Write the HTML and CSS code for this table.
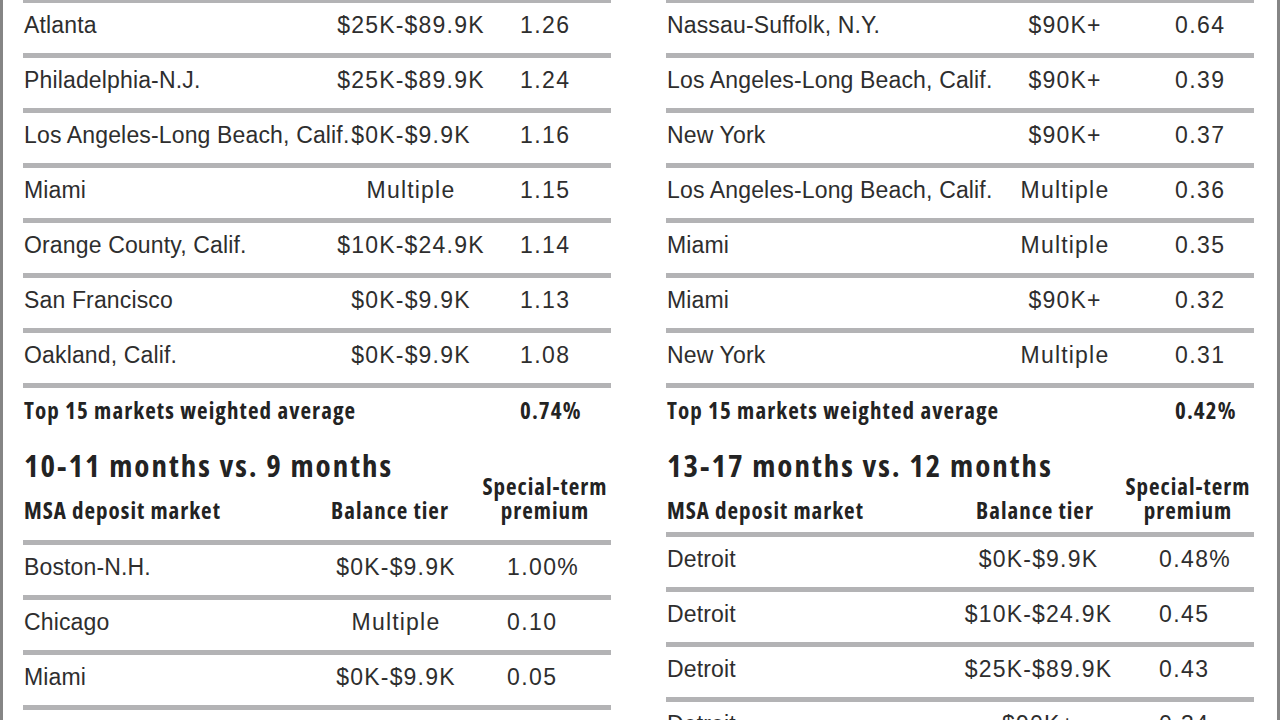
FILE: index.html
```html
<!DOCTYPE html>
<html lang="en">
<head>
<meta charset="utf-8">
<title>Special-term premiums by market</title>
<link rel="stylesheet" href="styles.css">
</head>
<body>
<div class="page">
  <section class="col">
    <div class="rule rule-top"></div>
    <div class="table t-tl">
      <div class="row"><span class="mkt">Atlanta</span><span class="tier">$25K-$89.9K</span><span class="val">1.26</span></div>
      <div class="row"><span class="mkt">Philadelphia-N.J.</span><span class="tier">$25K-$89.9K</span><span class="val">1.24</span></div>
      <div class="row"><span class="mkt">Los Angeles-Long Beach, Calif.</span><span class="tier">$0K-$9.9K</span><span class="val">1.16</span></div>
      <div class="row"><span class="mkt">Miami</span><span class="tier">Multiple</span><span class="val">1.15</span></div>
      <div class="row"><span class="mkt">Orange County, Calif.</span><span class="tier">$10K-$24.9K</span><span class="val">1.14</span></div>
      <div class="row"><span class="mkt">San Francisco</span><span class="tier">$0K-$9.9K</span><span class="val">1.13</span></div>
      <div class="row"><span class="mkt">Oakland, Calif.</span><span class="tier">$0K-$9.9K</span><span class="val">1.08</span></div>
      <div class="row total"><span class="mkt">Top 15 markets weighted average</span><span class="tier"></span><span class="val">0.74%</span></div>
    </div>
    <h2 class="heading">10-11 months vs. 9 months</h2>
    <div class="hdr h-ll">
      <span class="h-mkt">MSA deposit market</span>
      <span class="h-tier">Balance tier</span>
      <span class="h-prem">Special-term<br>premium</span>
    </div>
    <div class="table t-ll">
      <div class="row"><span class="mkt">Boston-N.H.</span><span class="tier">$0K-$9.9K</span><span class="val">1.00%</span></div>
      <div class="row"><span class="mkt">Chicago</span><span class="tier">Multiple</span><span class="val">0.10</span></div>
      <div class="row"><span class="mkt">Miami</span><span class="tier">$0K-$9.9K</span><span class="val">0.05</span></div>
    </div>
  </section>

  <section class="col">
    <div class="rule rule-top"></div>
    <div class="table t-tr">
      <div class="row"><span class="mkt">Nassau-Suffolk, N.Y.</span><span class="tier">$90K+</span><span class="val">0.64</span></div>
      <div class="row"><span class="mkt">Los Angeles-Long Beach, Calif.</span><span class="tier">$90K+</span><span class="val">0.39</span></div>
      <div class="row"><span class="mkt">New York</span><span class="tier">$90K+</span><span class="val">0.37</span></div>
      <div class="row"><span class="mkt">Los Angeles-Long Beach, Calif.</span><span class="tier">Multiple</span><span class="val">0.36</span></div>
      <div class="row"><span class="mkt">Miami</span><span class="tier">Multiple</span><span class="val">0.35</span></div>
      <div class="row"><span class="mkt">Miami</span><span class="tier">$90K+</span><span class="val">0.32</span></div>
      <div class="row"><span class="mkt">New York</span><span class="tier">Multiple</span><span class="val">0.31</span></div>
      <div class="row total"><span class="mkt">Top 15 markets weighted average</span><span class="tier"></span><span class="val">0.42%</span></div>
    </div>
    <h2 class="heading">13-17 months vs. 12 months</h2>
    <div class="hdr h-lr">
      <span class="h-mkt">MSA deposit market</span>
      <span class="h-tier">Balance tier</span>
      <span class="h-prem">Special-term<br>premium</span>
    </div>
    <div class="table t-lr">
      <div class="row"><span class="mkt">Detroit</span><span class="tier">$0K-$9.9K</span><span class="val">0.48%</span></div>
      <div class="row"><span class="mkt">Detroit</span><span class="tier">$10K-$24.9K</span><span class="val">0.45</span></div>
      <div class="row"><span class="mkt">Detroit</span><span class="tier">$25K-$89.9K</span><span class="val">0.43</span></div>
      <div class="row"><span class="mkt">Detroit</span><span class="tier">$90K+</span><span class="val">0.34</span></div>
    </div>
  </section>
</div>
</body>
</html>
```

FILE: styles.css
```css
html, body {
  margin: 0;
  padding: 0;
  background: #ffffff;
}

body {
  width: 1280px;
  height: 720px;
  overflow: hidden;
  font-family: "Liberation Sans", Arial, sans-serif;
  color: #2e2e2e;
}

.page {
  box-sizing: border-box;
  width: 1280px;
  height: 720px;
  overflow: hidden;
  border-left: 3px solid #858585;
  border-right: 3px solid #858585;
  padding: 0 23px 0 20px;
  display: flex;
  gap: 55px;
  align-items: flex-start;
}

.col {
  width: 588px;
  flex: none;
  display: flex;
  flex-direction: column;
}

.rule {
  height: 5px;
  background: #b3b3b5;
}

.rule-top {
  margin-top: -2px;
}

.row {
  display: grid;
  grid-template-columns: var(--c1) var(--c2) 1fr;
  font-size: 23px;
  line-height: 44px;
  padding-bottom: 6px;
  border-bottom: 5px solid #b3b3b5;
  white-space: nowrap;
}

.row.total {
  border-bottom: none;
}

.mkt {
  padding-left: 1px;
  letter-spacing: 0.15px;
}

.tier {
  text-align: center;
  letter-spacing: 1.2px;
}

.val {
  text-align: left;
  letter-spacing: 1.4px;
}

.total,
.heading,
.hdr {
  font-family: "Open Sans", "DejaVu Sans Condensed", sans-serif;
  font-stretch: 75%;
  font-weight: 700;
  color: #232323;
}

.total {
  font-size: 23px;
}

.total .mkt,
.total .val {
  letter-spacing: 1.1px;
}

.t-tl { --c1: 279px; --c2: 218px; }
.t-tr { --c1: 289px; --c2: 220px; }
.t-ll { --c1: 262px; --c2: 222px; }
.t-lr { --c1: 252px; --c2: 241px; }

.heading {
  margin: 17px 0 0 1px;
  font-size: 31px;
  line-height: 20px;
  letter-spacing: 2px;
  white-space: nowrap;
}

.hdr {
  margin-top: -1px;
  display: grid;
  align-items: end;
  font-size: 23px;
  line-height: 24px;
  letter-spacing: 1px;
  white-space: nowrap;
  border-bottom: 5px solid #b3b3b5;
}

.h-ll {
  grid-template-columns: 282px 120px 140px;
  column-gap: 25px;
  padding-bottom: 18px;
}

.h-lr {
  grid-template-columns: 286px 120px 140px;
  column-gap: 23px;
  padding-bottom: 10px;
}

.h-mkt {
  padding-left: 1px;
}

.h-tier,
.h-prem {
  text-align: center;
}
```
